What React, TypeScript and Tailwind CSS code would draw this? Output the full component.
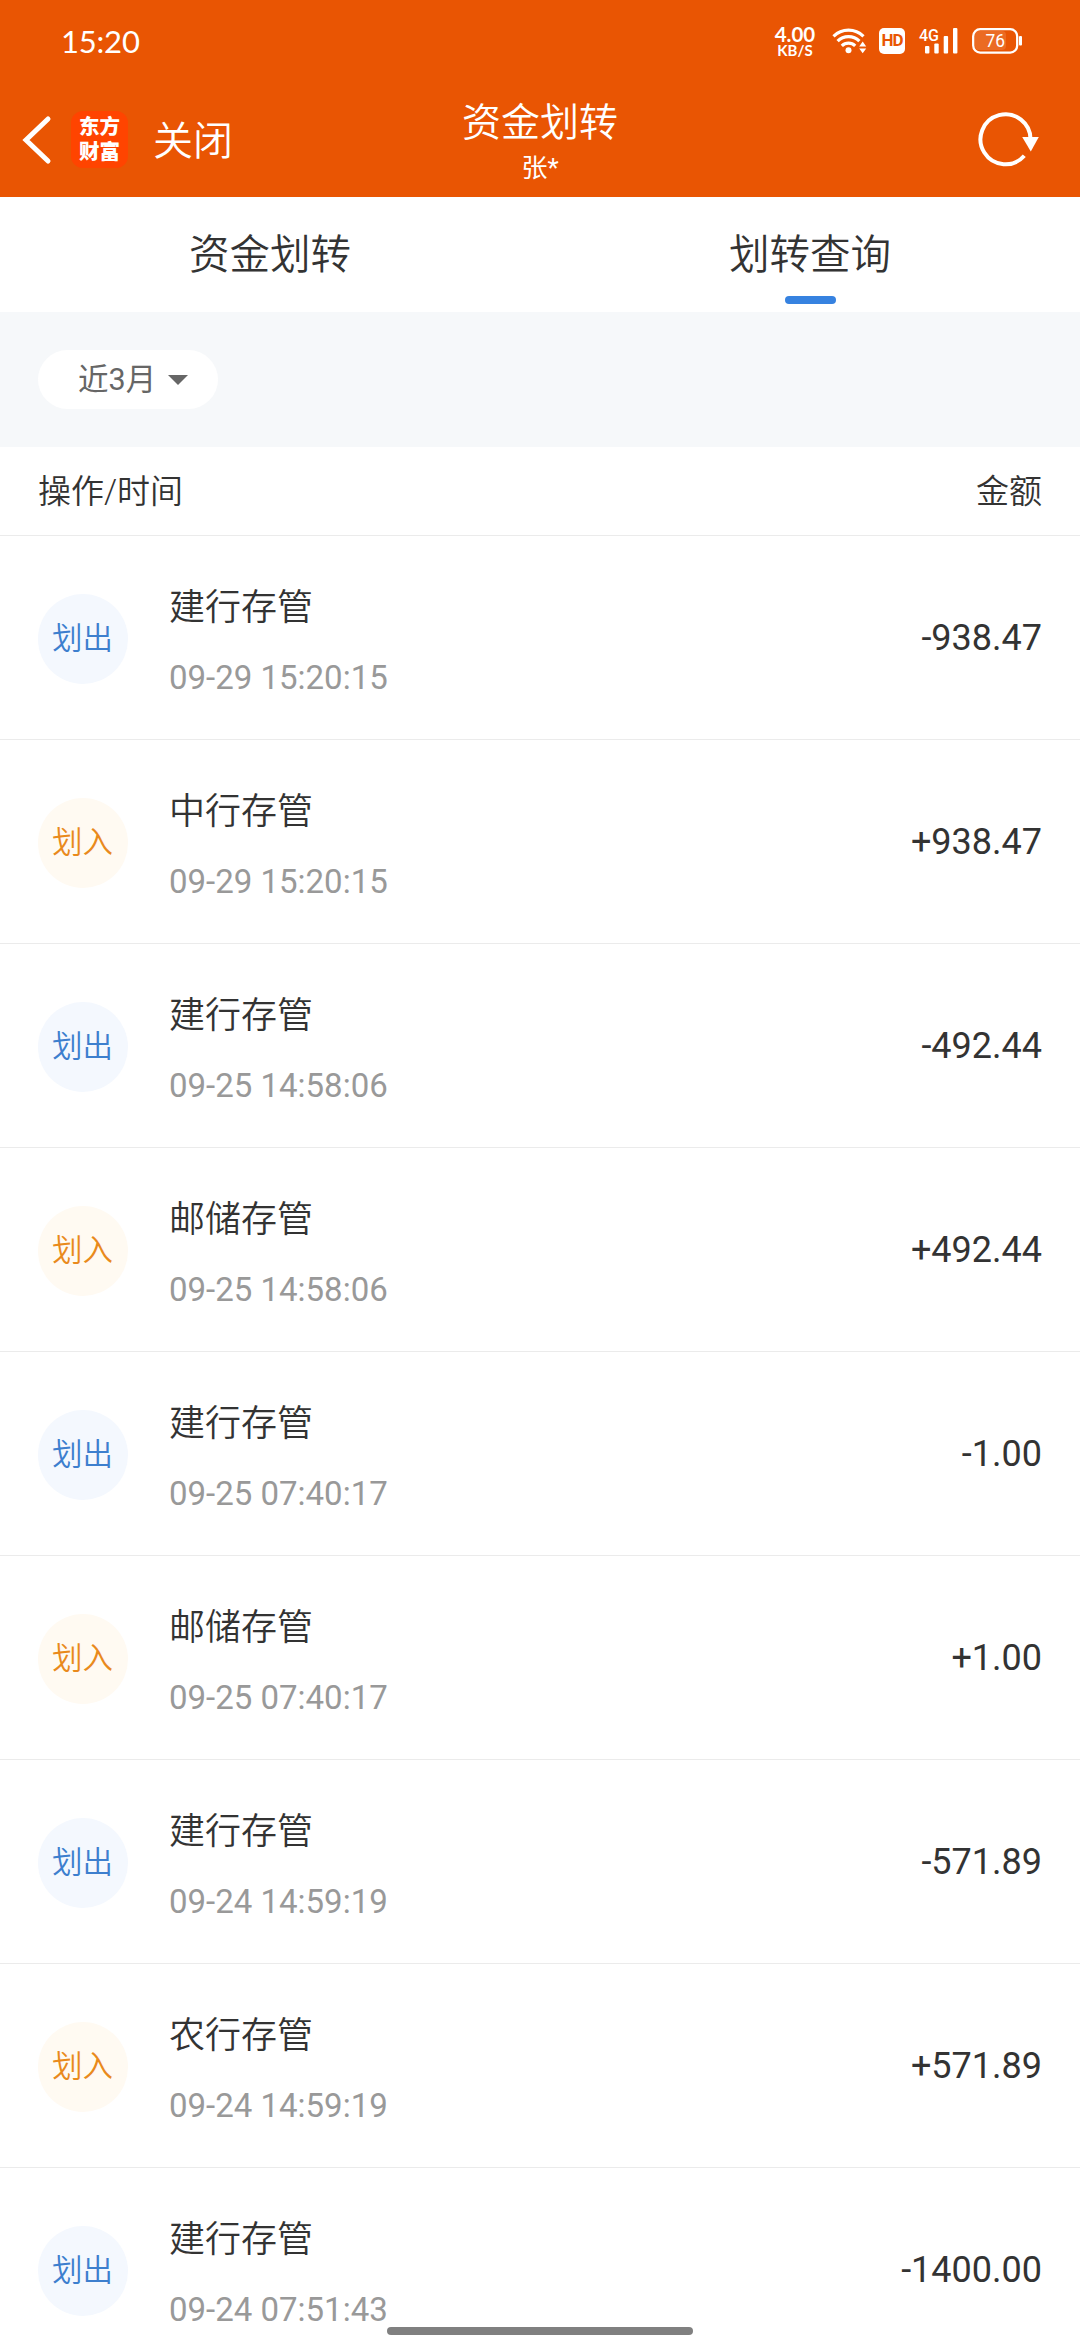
import React from 'react';
import clsx from 'clsx';

type Direction = 'in' | 'out';

interface Transfer {
    id: number;
    direction: Direction;
    bank: string;
    time: string;
    amount: string;
}

const transfers: Transfer[] = [
    { id: 1, direction: 'out', bank: '建行存管', time: '09-29 15:20:15', amount: '-938.47' },
    { id: 2, direction: 'in', bank: '中行存管', time: '09-29 15:20:15', amount: '+938.47' },
    { id: 3, direction: 'out', bank: '建行存管', time: '09-25 14:58:06', amount: '-492.44' },
    { id: 4, direction: 'in', bank: '邮储存管', time: '09-25 14:58:06', amount: '+492.44' },
    { id: 5, direction: 'out', bank: '建行存管', time: '09-25 07:40:17', amount: '-1.00' },
    { id: 6, direction: 'in', bank: '邮储存管', time: '09-25 07:40:17', amount: '+1.00' },
    { id: 7, direction: 'out', bank: '建行存管', time: '09-24 14:59:19', amount: '-571.89' },
    { id: 8, direction: 'in', bank: '农行存管', time: '09-24 14:59:19', amount: '+571.89' },
    { id: 9, direction: 'out', bank: '建行存管', time: '09-24 07:51:43', amount: '-1400.00' },
];

const WifiIcon: React.FC = () => (
    <svg width="36" height="28" viewBox="0 0 36 28" fill="none" stroke="currentColor" strokeWidth="3.2">
        <path d="M1.5 9.3a21.5 21.5 0 0 1 30 0" />
        <path d="M5.6 14.2a15.5 15.5 0 0 1 21.8 0" />
        <path d="M9.8 18.9a9.6 9.6 0 0 1 13.4 0" />
        <circle cx="16.5" cy="23.3" r="3" fill="currentColor" stroke="none" />
        <path d="M27.2 19.4l3.5-4.8 3.5 4.8zM27.2 21.4l3.5 4.8 3.5-4.8z" fill="currentColor" stroke="none" />
    </svg>
);

const SignalIcon: React.FC = () => (
    <svg className="overflow-visible" width="40" height="28" viewBox="0 0 40 28" fill="currentColor">
        <text x="0" y="14" fontSize="17" fontWeight="500" textLength="20" lengthAdjust="spacingAndGlyphs">
            4G
        </text>
        <rect x="6" y="19" width="4.4" height="7.5" rx="1" />
        <rect x="15.3" y="16.5" width="4.4" height="10" rx="1" />
        <rect x="24.7" y="9" width="4.4" height="17.5" rx="1" />
        <rect x="34" y="1" width="4.4" height="25.5" rx="1" />
    </svg>
);

const BatteryIcon: React.FC = () => (
    <svg width="52" height="28" viewBox="0 0 52 28" fill="none">
        <rect x="4" y="4" width="31" height="19" rx="4" fill="#fff" fillOpacity="0.13" />
        <rect x="2.2" y="2.2" width="44" height="23.4" rx="7" stroke="currentColor" strokeWidth="2.3" />
        <rect x="48" y="9" width="3" height="9.5" rx="1" fill="currentColor" />
        <text x="14.5" y="19.7" fontSize="17.5" fill="currentColor" textLength="19.5" lengthAdjust="spacingAndGlyphs">
            76
        </text>
    </svg>
);

const StatusBar: React.FC = () => (
    <div className="flex h-[81px] items-center justify-between pr-[57px] pl-[61px]">
        <span className="font-[Lato] text-[31px] leading-8 tracking-[-0.2px]">15:20</span>
        <div className="flex items-center">
            <div className="mr-[16px] flex w-[42px] flex-col items-center font-[Lato] font-bold">
                <span className="text-[20.5px] leading-[18px]">4.00</span>
                <span className="text-[15px] leading-[14px]">KB/S</span>
            </div>
            <WifiIcon />
            <span className="mr-[14px] ml-[11px] flex h-[26px] w-[26px] items-center justify-center rounded-[5px] bg-white text-[17px] leading-none font-bold tracking-[-1px] text-[#e95503]">
                HD
            </span>
            <SignalIcon />
            <span className="w-[12px]" />
            <BatteryIcon />
        </div>
    </div>
);

const NavBar: React.FC = () => (
    <div className="grid h-[116px] grid-cols-[1fr_auto_1fr]">
        <div className="flex items-start">
            <svg className="mt-[33px] ml-[21px]" width="32" height="52" viewBox="0 0 32 52" fill="none">
                <path d="M27 5L5 26l22 21" stroke="currentColor" strokeWidth="5" strokeLinecap="round" />
            </svg>
            <div className="mt-[30px] ml-[18px] flex h-[57px] w-[57px] flex-col items-center justify-center rounded-[12px] bg-[#ff4400] text-[20.5px] leading-[25px] font-black">
                <span>东方</span>
                <span>财富</span>
            </div>
            <span className="mt-[37px] ml-[25px] text-[40px] leading-[48px] font-[350]">关闭</span>
        </div>
        <div className="flex flex-col items-center pt-[19px]">
            <h1 className="text-[39px] leading-[46px] font-[350]">资金划转</h1>
            <span className="mt-[6px] text-[26px] leading-[32px]">张*</span>
        </div>
        <div className="flex items-start justify-end pr-[38px]">
            <svg className="mt-[28px]" width="66" height="60" viewBox="0 0 66 60" fill="none">
                <path d="M54.5 31A25 25 0 1 0 48.3 46.8" stroke="currentColor" strokeWidth="4" />
                <path d="M46.2 28h16.6l-8 14.5z" fill="currentColor" />
            </svg>
        </div>
    </div>
);

const Tabs: React.FC = () => (
    <div className="grid h-[115px] grid-cols-2 text-[40.5px] leading-[50px] font-[350]">
        <div className="flex flex-col items-center pt-[33px]">资金划转</div>
        <div className="flex flex-col items-center pt-[33px]">
            划转查询
            <span className="mt-[16px] h-2 w-[51px] rounded-full bg-[#3682e0]" />
        </div>
    </div>
);

const TransferRow: React.FC<{ item: Transfer }> = ({ item }) => (
    <li className="flex h-[204px] items-start border-b border-[#ebebeb] px-[38px]">
        <div
            className={clsx(
                'mt-[58px] flex h-[90px] w-[90px] items-center justify-center rounded-full pr-px text-[30.5px] leading-none font-[350]',
                item.direction === 'out' ? 'bg-[#f4f8fe] text-[#3d7fce]' : 'bg-[#fffaf2] text-[#e98a1c]'
            )}
        >
            {item.direction === 'out' ? '划出' : '划入'}
        </div>
        <div className="mt-[48px] ml-[41px] flex-1">
            <p className="text-[36px] leading-[48px] font-[350]">{item.bank}</p>
            <p className="mt-[25px] text-[33px] leading-[42px] text-[#999]">{item.time}</p>
        </div>
        <span className="mt-[78px] text-[36px] leading-[48px]">{item.amount}</span>
    </li>
);

const App: React.FC = () => {
    return (
        <div className="relative h-[2340px] w-[1080px] overflow-hidden bg-white font-[Roboto,'Noto_Sans_CJK_SC',sans-serif] text-[#333]">
            <header className="bg-[#e95503] text-white">
                <StatusBar />
                <NavBar />
            </header>

            <Tabs />

            {/* Period filter */}
            <div className="flex h-[135px] items-center bg-[#f6f8fa] px-[38px]">
                <button className="flex h-[59px] w-[180px] items-center rounded-full bg-white pt-px pl-[40px] text-[30.5px] leading-none text-[#666]">
                    近3月
                    <svg className="ml-[12px]" width="20" height="10" viewBox="0 0 20 10" fill="currentColor">
                        <path d="M0 0h20L10 10z" />
                    </svg>
                </button>
            </div>

            <div className="flex h-[89px] items-center justify-between border-b border-[#ebebeb] px-[38px] text-[33px] leading-none font-[350]">
                <span>操作/时间</span>
                <span>金额</span>
            </div>

            <ul>
                {transfers.map((item) => (
                    <TransferRow key={item.id} item={item} />
                ))}
            </ul>

            {/* System gesture bar */}
            <div className="absolute top-[2327px] left-[387px] h-2 w-[306px] rounded-full bg-[#808080]" />
        </div>
    );
};

export default App;
